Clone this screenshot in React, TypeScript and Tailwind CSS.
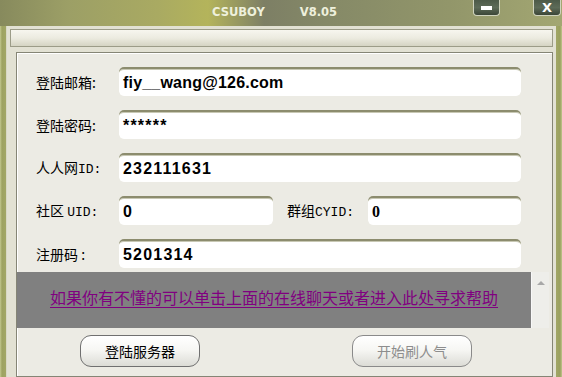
import React from "react";

const CJK = "font-['Noto_Sans_CJK_SC',sans-serif]";
const MONO = "font-['Liberation_Mono',monospace]";

function Field({ value, w, serif, track }: { value: string; w: string; serif?: boolean; track?: boolean }) {
  return (
    <div
      className={`${w} h-[29px] shrink-0 flex items-center pl-[4px] bg-white rounded-[5px] border-t-2 border-[#8c8c6e] shadow-[inset_0_1px_0_#c8c8b4] text-[16px] font-bold text-black leading-none ${
        serif ? "font-['Liberation_Serif',serif]" : "font-['Liberation_Sans',Arial,sans-serif]"
      } ${track ? "tracking-[1.2px]" : "tracking-[0.2px]"}`}
    >
      {value}
    </div>
  );
}

function Label({ children, w }: { children: React.ReactNode; w: string }) {
  return <div className={`${w} shrink-0 ${CJK} text-[14px] text-black leading-none`}>{children}</div>;
}

export default function App() {
  return (
    <div className="w-[562px] h-[377px] overflow-hidden flex flex-col bg-[linear-gradient(90deg,#c3c88f_0px,#9da261_2px,#a1a665_5px,#a1a665_556px,#9aa05f_560px,#c0c58c_562px)]">
      {/* title bar */}
      <div className="h-[26px] shrink-0 flex items-start bg-[linear-gradient(90deg,#878a5d_0%,#9c9f66_12%,#a9aa62_28%,#b4b45b_37%,#7d7f65_47%,#858967_58%,#92966a_80%,#a3a772_100%)]">
        <div className="pl-[212px] pt-[7px] flex font-['DejaVu_Sans',sans-serif] font-bold text-[11.5px] leading-none text-[#eef0dc]">
          <span>CSUBOY</span>
          <span className="ml-[35px]">V8.05</span>
        </div>
        <div className="flex-1" />
        <div className="w-[27px] h-[16px] flex items-center justify-center rounded-b-[4px] border border-t-0 border-[#cfd3bd] bg-[linear-gradient(180deg,#4c5a48_0%,#5d6b58_50%,#3b4637_100%)]">
          <div className="w-[11px] h-[4px] bg-white" />
        </div>
        <div className="w-[28px] h-[16px] ml-[33px] mr-[1px] flex items-center justify-center rounded-b-[4px] border border-t-0 border-[#cfd3bd] bg-[linear-gradient(180deg,#4c5a48_0%,#5d6b58_50%,#3b4637_100%)] text-white font-['DejaVu_Sans',sans-serif] font-bold text-[13px] leading-none">
          X
        </div>
      </div>

      {/* body */}
      <div className="flex-1 ml-[6px] mr-[6px] flex flex-col bg-[#e2e1d3] border-l border-[#d8d8c4] pt-[3px]">
        <div className="h-[18px] mx-[3px] shrink-0 border border-[#9c9c88] bg-[linear-gradient(180deg,#f7f6ef_0%,#ecebe0_50%,#d5d4c3_100%)]" />
        <div className="flex-1 ml-[9px] mr-[3px] mt-[5px] flex flex-col bg-[#ecebe4] border border-[#858575] shadow-[inset_1px_1px_0_#ffffff]">
          <div className="flex flex-col gap-[14px] pt-[14px] pl-[19px]">
            <div className="flex items-center">
              <Label w="w-[83px]">登陆邮箱:</Label>
              <Field value="fiy__wang@126.com" w="w-[402px]" />
            </div>
            <div className="flex items-center">
              <Label w="w-[83px]">登陆密码:</Label>
              <Field value="******" w="w-[402px]" track />
            </div>
            <div className="flex items-center">
              <Label w="w-[83px]">
                人人网<span className={`${MONO} text-[13px]`}>ID:</span>
              </Label>
              <Field value="232111631" w="w-[402px]" track />
            </div>
            <div className="flex items-center">
              <Label w="w-[83px]">
                社区 <span className={`${MONO} text-[13px]`}>UID:</span>
              </Label>
              <Field value="0" w="w-[154px]" />
              <div className="w-[14px] shrink-0" />
              <Label w="w-[81px]">
                群组<span className={`${MONO} text-[13px]`}>CYID:</span>
              </Label>
              <Field value="0" w="w-[153px]" serif />
            </div>
            <div className="flex items-center">
              <Label w="w-[83px]">注册码 :</Label>
              <Field value="5201314" w="w-[402px]" track />
            </div>
          </div>

          {/* help strip */}
          <div className="mt-[4px] h-[56px] mr-[3px] flex">
            <div className="flex-1 bg-[#808080] flex items-center justify-center pb-[6px]">
              <span className={`${CJK} text-[16px] leading-none text-[#800080] underline underline-offset-[3px]`}>
                如果你有不懂的可以单击上面的在线聊天或者进入此处寻求帮助
              </span>
            </div>
            <div className="w-[18px] bg-[#eeeeea] border-l border-[#f8f8f8] flex justify-center pt-[9px]">
              <div className="w-0 h-0 border-l-[4px] border-r-[4px] border-b-[4px] border-l-transparent border-r-transparent border-b-[#a8a8a8]" />
            </div>
          </div>

          {/* buttons */}
          <div className="flex pt-[7px] pl-[63px] gap-[152px]">
            <div className={`w-[120px] h-[32px] rounded-[11px] border border-[#707070] bg-[linear-gradient(180deg,#ffffff_0%,#f7f7f4_45%,#dcdcd6_100%)] flex items-center justify-center ${CJK} text-[14px] text-black leading-none`}>
              登陆服务器
            </div>
            <div className={`w-[120px] h-[32px] rounded-[11px] border border-[#8a8a8a] bg-[linear-gradient(180deg,#ffffff_0%,#f7f7f4_45%,#dcdcd6_100%)] flex items-center justify-center ${CJK} text-[14px] text-[#8d8d8d] leading-none`}>
              开始刷人气
            </div>
          </div>
        </div>
      </div>
    </div>
  );
}
